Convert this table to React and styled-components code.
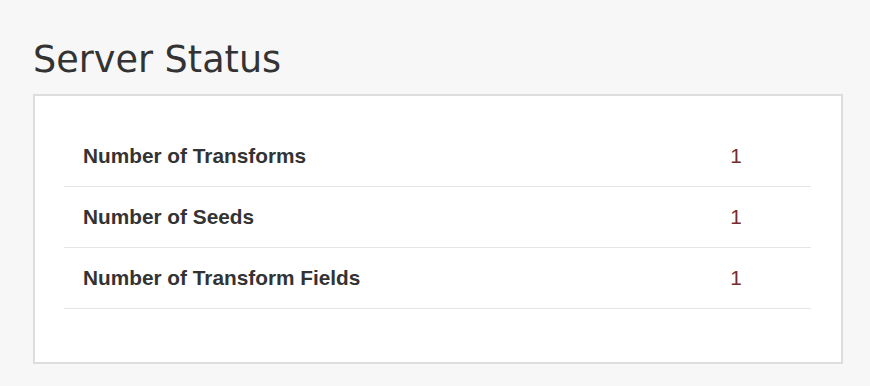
import React from "react";
import styled, { createGlobalStyle } from "styled-components";

const GlobalStyle = createGlobalStyle`
  body {
    margin: 0;
    background: #f7f7f7;
    font-family: "Liberation Sans", Arial, sans-serif;
    color: #333;
  }
`;

const Page = styled.div`
  padding: 0 27px 23px 33px;
`;

const Title = styled.h1`
  margin: 0;
  padding: 37px 0 12px;
  font-family: "DejaVu Sans", sans-serif;
  font-size: 36.6px;
  font-weight: normal;
  line-height: 45px;
  color: #333;
`;

const Card = styled.div`
  background: #fff;
  border: 2px solid #ddd;
  padding: 30px 30px 53px 29px;
`;

const Table = styled.div`
  display: flex;
  flex-direction: column;
`;

const Row = styled.div`
  display: grid;
  grid-template-columns: 1fr 150px;
  align-items: center;
  height: 60px;
  border-bottom: 1px solid #e5e5e5;
`;

const Label = styled.div`
  padding-left: 19px;
  font-size: 20.8px;
  font-weight: bold;
  color: #333;
`;

const Value = styled.div`
  text-align: center;
  font-size: 20.8px;
  color: #772b2b;
`;

const stats = [
  { label: "Number of Transforms", value: 1 },
  { label: "Number of Seeds", value: 1 },
  { label: "Number of Transform Fields", value: 1 },
];

const App = () => {
  return (
    <Page>
      <GlobalStyle />
      <Title>Server Status</Title>
      <Card>
        <Table>
          {stats.map(s => (
            <Row key={s.label}>
              <Label>{s.label}</Label>
              <Value>{s.value}</Value>
            </Row>
          ))}
        </Table>
      </Card>
    </Page>
  );
};

export default App;
